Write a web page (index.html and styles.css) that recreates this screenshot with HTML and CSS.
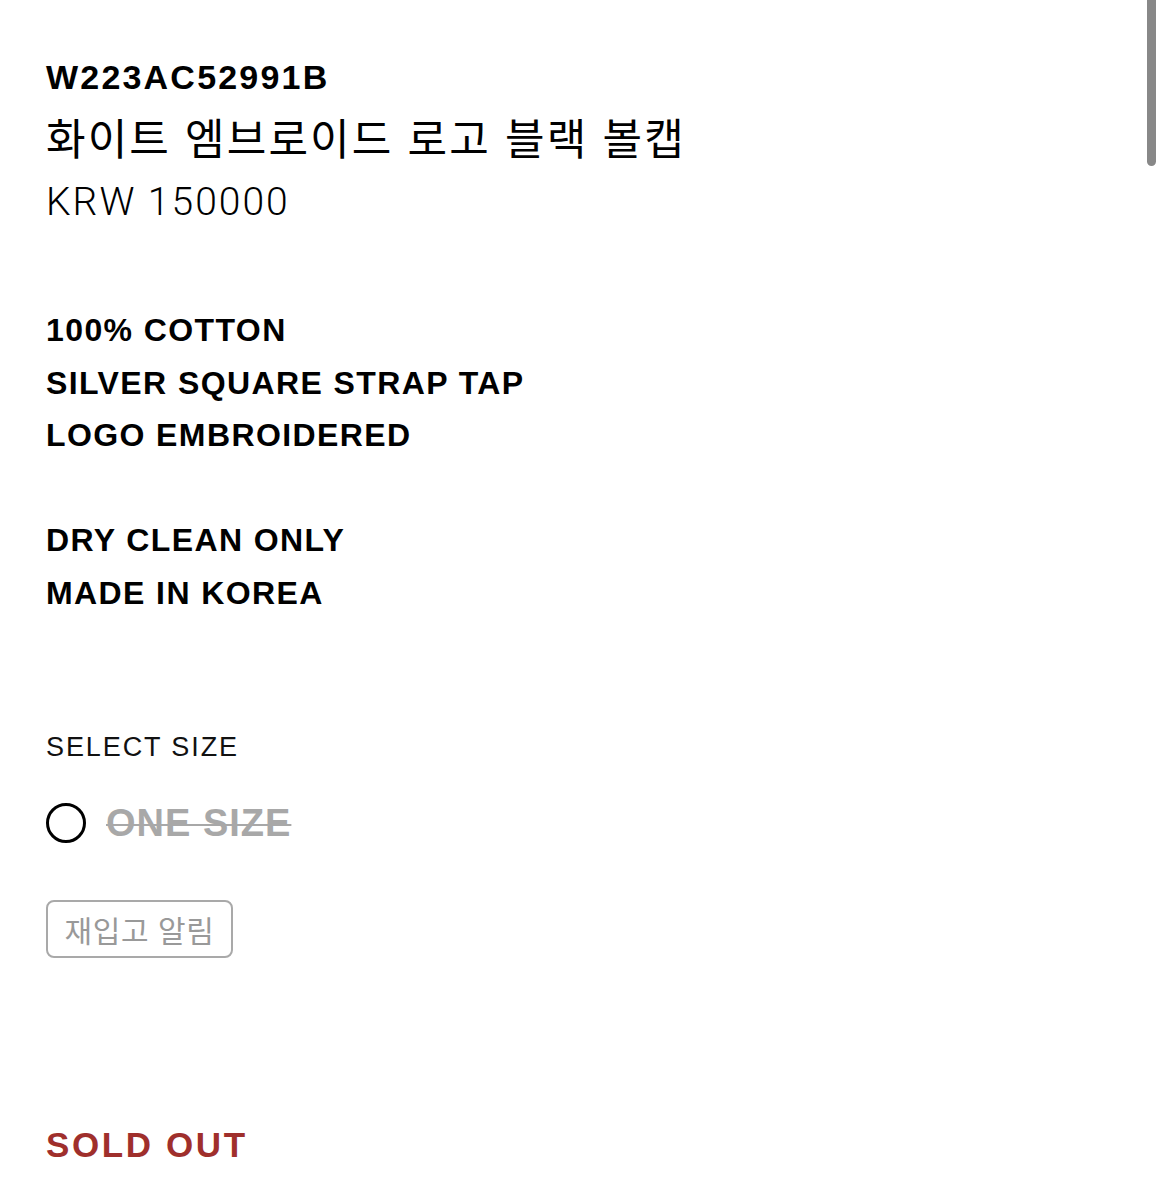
FILE: index.html
```html
<!DOCTYPE html>
<html lang="ko">
<head>
    <meta charset="UTF-8">
    <meta name="viewport" content="width=device-width, initial-scale=1.0">
    <title>W223AC52991B</title>
    <link rel="stylesheet" href="styles.css">
</head>
<body>
    <div class="product">
        <div class="product-code">W223AC52991B</div>
        <h1 class="product-name">화이트 엠브로이드 로고 블랙 볼캡</h1>
        <div class="product-price">KRW 150000</div>

        <div class="details">
            <p>100% COTTON<br>SILVER SQUARE STRAP TAP<br>LOGO EMBROIDERED</p>
            <p>DRY CLEAN ONLY<br>MADE IN KOREA</p>
        </div>

        <div class="size-select">
            <div class="size-title">SELECT SIZE</div>
            <label class="size-option">
                <span class="radio"></span>
                <span class="size-name">ONE SIZE</span>
            </label>
            <button type="button" class="restock">재입고 알림</button>
        </div>

        <div class="sold-out">SOLD OUT</div>
    </div>

    <div class="scroll-thumb"></div>
</body>
</html>
```

FILE: styles.css
```css
body {
    margin: 0;
    padding: 0 46px;
    background-color: #fff;
    color: #000;
    font-family: "Liberation Sans", Arial, "Noto Sans CJK KR", sans-serif;
}

.product {
    padding-top: 57px;
}

.product-code {
    font-size: 34px;
    font-weight: bold;
    line-height: 40px;
    letter-spacing: 2.2px;
}

.product-name {
    margin: 13px 0 0;
    font-family: "Noto Sans CJK KR", sans-serif;
    font-size: 43px;
    font-weight: normal;
    line-height: 52px;
    letter-spacing: 2.1px;
}

.product-price {
    margin-top: 18px;
    font-family: Roboto, "Liberation Sans", sans-serif;
    font-weight: 300;
    font-size: 39px;
    line-height: 44px;
    letter-spacing: 2px;
}

.details {
    margin-top: 80px;
    font-size: 32px;
    font-weight: bold;
    line-height: 52.5px;
    letter-spacing: 1.4px;
}

.details p {
    margin: 0 0 52.5px;
}

.details p:last-child {
    margin-bottom: 0;
}

.size-select {
    margin-top: 112px;
}

.size-title {
    font-size: 27px;
    line-height: 32px;
    letter-spacing: 1.9px;
    color: #111;
}

.size-option {
    display: flex;
    align-items: center;
    gap: 20px;
    margin-top: 40px;
}

.radio {
    width: 40px;
    height: 40px;
    border: 3px solid #000;
    border-radius: 50%;
    box-sizing: border-box;
}

.size-name {
    color: #a8a8a8;
    font-size: 38px;
    font-weight: bold;
    line-height: 40px;
    letter-spacing: 1px;
    text-decoration: line-through;
    text-decoration-thickness: 2px;
}

.restock {
    display: block;
    box-sizing: border-box;
    width: 187px;
    height: 58px;
    margin-top: 57px;
    padding: 0;
    border: 2px solid #a9a9a9;
    border-radius: 8px;
    background: #fff;
    color: #999;
    font-family: "Noto Sans CJK KR", sans-serif;
    font-size: 30px;
    letter-spacing: 0.6px;
}

.sold-out {
    margin-top: 167px;
    color: #9f2f2c;
    font-size: 35px;
    font-weight: bold;
    line-height: 40px;
    letter-spacing: 2.6px;
}

.scroll-thumb {
    position: fixed;
    top: 0;
    right: 8px;
    width: 9px;
    height: 166px;
    border-radius: 0 0 5px 5px;
    background-color: #888;
}
```
